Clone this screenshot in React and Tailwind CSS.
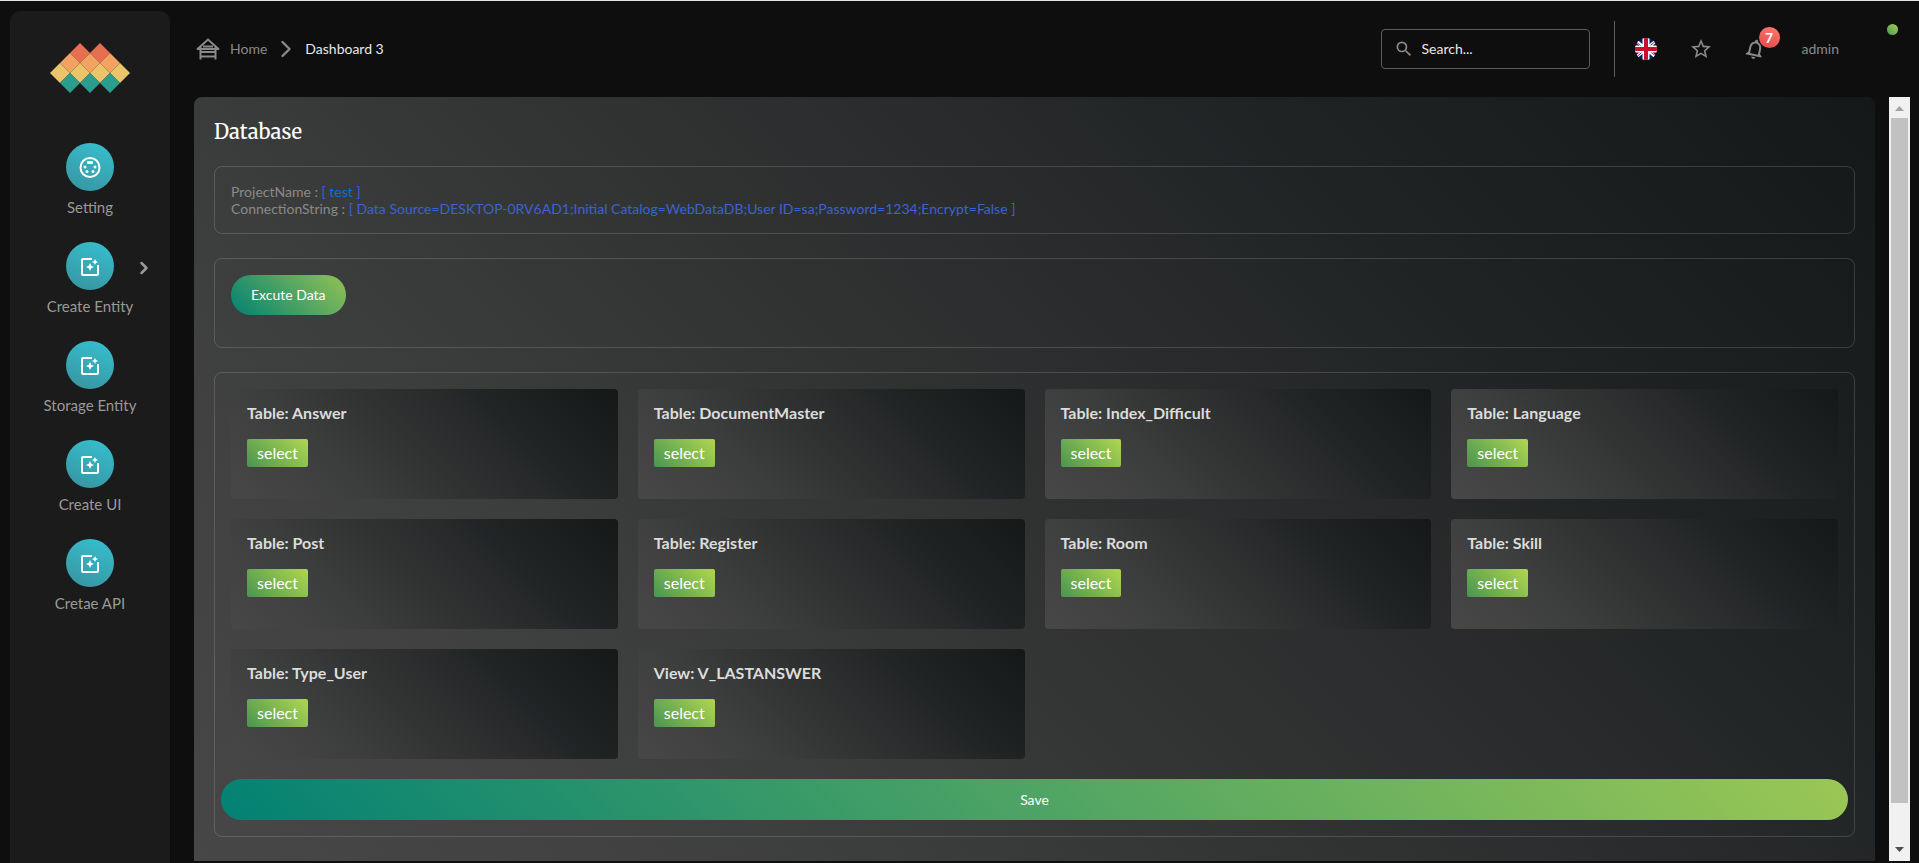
import { useState } from "react";
import { ChevronRight } from "lucide-react";
import { MdOutlineStarBorder, MdSearch } from "react-icons/md";

const menu = [
  { label: "Setting", icon: "setting" },
  { label: "Create Entity", icon: "create", children: true },
  { label: "Storage Entity", icon: "create" },
  { label: "Create UI", icon: "create" },
  { label: "Cretae API", icon: "create" },
];

const tables = [
  "Table: Answer",
  "Table: DocumentMaster",
  "Table: Index_Difficult",
  "Table: Language",
  "Table: Post",
  "Table: Register",
  "Table: Room",
  "Table: Skill",
  "Table: Type_User",
  "View: V_LASTANSWER",
];

const logoTiles = [
  { y: 10, xs: [30, 50], color: "#e76f51" },
  { y: 20, xs: [20, 40, 60], color: "#f4a261" },
  { y: 30, xs: [10, 30, 50, 70], color: "#e9c46a" },
  { y: 40, xs: [20, 40, 60], color: "#2a9d8f" },
];

const Logo = () => (
  <svg viewBox="0 0 80 50" className="h-[50px] w-20" role="img" aria-label="Logo">
    {logoTiles.map((row) =>
      row.xs.map((x) => (
        <path
          key={`${x}-${row.y}`}
          d={`M${x} ${row.y - 10}l10 10l-10 10l-10-10z`}
          fill={row.color}
        />
      ))
    )}
  </svg>
);

const SettingIcon = () => (
  <svg viewBox="0 0 24 24" className="size-6" fill="currentColor">
    <circle cx="12" cy="12.5" r="9.5" fill="none" stroke="currentColor" strokeWidth="2" />
    <rect x="9" y="6" width="6" height="3" rx="1" />
    <circle cx="7" cy="12" r="1.5" />
    <circle cx="17" cy="12" r="1.5" />
    <circle cx="9" cy="16.5" r="1.5" />
    <circle cx="15" cy="16.5" r="1.5" />
  </svg>
);

const CreateIcon = () => (
  <svg viewBox="0 0 24 24" className="size-6" fill="currentColor">
    <path d="M19 11v9H5V6h9V4H5c-1.100 0-2 .9-2 2v14c0 1.100.9 2 2 2h14c1.100 0 2-.9 2-2v-9z" />
    <path d="M17 11l.94-2.060L20 8l-2.060-.94L17 5l-.94 2.060L14 8l2.060.94z" />
    <path d="M13.250 11.750L12 9l-1.250 2.750L8 13l2.750 1.250L12 17l1.250-2.750L16 13z" />
  </svg>
);

const HomeIcon = () => (
  <svg viewBox="0 0 24 22" className="h-[22px] w-6" fill="none" stroke="currentColor" strokeWidth="2">
    <path d="M1 11.5L12 1.500l11 10M4.500 9v12.500M19.500 9v12.500M7 8.500h10M1 11h22M4.500 14h15M4.500 18.500h15" />
  </svg>
);

const BellIcon = () => (
  <svg viewBox="0 0 24 24" className="size-6 rotate-12" fill="currentColor">
    <path d="M12 22c1.100 0 2-.9 2-2h-4c0 1.100.9 2 2 2zm6-6v-5c0-3.070-1.630-5.640-4.500-6.320V4c0-.83-.67-1.500-1.500-1.500s-1.500.67-1.500 1.500v.68C7.640 5.360 6 7.920 6 11v5l-2 2v1h16v-1l-2-2zm-2 1H8v-6c0-2.480 1.510-4.500 4-4.500s4 2.020 4 4.500v6z" />
  </svg>
);

const Flag = () => (
  <svg viewBox="0 0 22 22" className="size-[22px]" role="img" aria-label="English">
    <clipPath id="round">
      <circle cx="11" cy="11" r="11" />
    </clipPath>
    <g clipPath="url(#round)">
      <rect width="22" height="22" fill="#012169" />
      <path d="M0 2l22 18M22 2L0 20" stroke="#fff" strokeWidth="3" />
      <path d="M0 3l11 9M22 2L11 11M0 20l11-9M22 19l-11-9" stroke="#c8102e" strokeWidth="1" />
      <path d="M11 0v22M0 11h22" stroke="#fff" strokeWidth="7" />
      <path d="M11 0v22M0 11h22" stroke="#c8102e" strokeWidth="4" />
    </g>
  </svg>
);

const Sidebar = () => (
  <aside className="mt-2.5 ml-2.5 flex w-40 shrink-0 flex-col items-center rounded-t-[10px] bg-[#1b1b1b] pt-8">
    <Logo />
    <nav className="mt-[50px] flex w-full flex-col gap-[25px]">
      {menu.map((item) => (
        <a
          key={item.label}
          href="#"
          className="relative flex flex-col items-center gap-1.5 text-[15px] leading-5 text-[#999]"
        >
          <span className="flex size-12 items-center justify-center rounded-full bg-linear-[20deg,#37939f,#37c0d0] text-white">
            {item.icon === "setting" ? <SettingIcon /> : <CreateIcon />}
          </span>
          <span>{item.label}</span>
          {item.children && (
            <ChevronRight className="absolute top-4 right-4 size-5" strokeWidth={3} />
          )}
        </a>
      ))}
    </nav>
  </aside>
);

const Header = () => {
  const [search, setSearch] = useState("");

  return (
    <header className="flex h-24 items-center text-sm text-[#8a8a8a]">
      <nav className="flex items-center" aria-label="Breadcrumb">
        <a href="#" className="ml-0.5 flex items-center gap-2.5">
          <HomeIcon />
          Home
        </a>
        <ChevronRight className="mx-[5px] size-7" strokeWidth={2} />
        <a href="#" className="text-[#e8e8e8]">
          Dashboard 3
        </a>
      </nav>

      <label className="ml-auto flex h-10 w-[209px] items-center gap-2 rounded border border-[#5c5c5c] px-3">
        <MdSearch className="size-5 shrink-0" />
        <input
          type="text"
          aria-label="Search"
          placeholder="Search..."
          value={search}
          onChange={(e) => setSearch(e.target.value)}
          className="w-full bg-transparent text-[#e8e8e8] outline-none placeholder:text-[#e8e8e8]"
        />
      </label>

      <div className="ml-6 flex h-14 items-center border-l border-[#5c5c5c] pl-5">
        <button type="button">
          <Flag />
        </button>
        <button type="button" className="ml-8" aria-label="Favorites">
          <MdOutlineStarBorder className="size-6" />
        </button>
        <button type="button" className="relative ml-[30px]" aria-label="Notifications">
          <BellIcon />
          <span className="absolute -top-2.5 left-4 flex size-[21px] items-center justify-center rounded-full bg-linear-[20deg,#e04848,#ff7b70] text-sm font-bold text-white">
            7
          </span>
        </button>
        <button type="button" className="ml-[35px]">
          admin
        </button>
      </div>
      <span className="mr-[21px] mb-10 ml-12 size-[11px] rounded-full bg-linear-[45deg,#4e9a55,#a5cf55]" />
    </header>
  );
};

const TableCard = ({ name }) => (
  <div className="h-[110px] rounded bg-linear-[45deg,#484747,#3c3e3d_28%,#323433_45%,#2a2b2d_60%,#1f2324_75%,#141819] px-4 pt-3">
    <h2 className="text-base leading-6 font-bold text-[#dcdcdc]">{name}</h2>
    <button
      type="button"
      className="mt-3.5 block h-7 rounded-[2px] bg-linear-[45deg,#4a9550,#b0d651] px-2.5 text-base leading-7 text-white"
    >
      select
    </button>
  </div>
);

const ScrollRail = () => (
  <div className="flex w-[21px] shrink-0 flex-col items-center bg-[#f1f1f1]" aria-hidden="true">
    <svg viewBox="0 0 21 21" className="size-[21px]">
      <path d="M6 14h9l-4.500-5z" fill="#a3a3a3" />
    </svg>
    <div className="w-[17px] grow bg-[#c1c1c1]" />
    <div className="h-[37px]" />
    <svg viewBox="0 0 21 21" className="size-[21px]">
      <path d="M6 7h9l-4.500 5z" fill="#505050" />
    </svg>
  </div>
);

const box = "rounded-lg border border-white/15";

const App = () => {
  return (
    <div className="flex h-screen overflow-hidden border-t border-[#dfe6e4] bg-[#0e0e0e] font-[Lato,sans-serif] text-sm">
      <Sidebar />
      <div className="ml-6 flex min-w-0 grow flex-col pb-0.5">
        <Header />
        <div className="flex min-h-0 grow gap-3.5 pr-[9px]">
          <main className="min-w-0 grow rounded-t-lg bg-linear-[45deg,#484747,#3c3e3d_28%,#323433_45%,#2a2b2d_60%,#1f2324_75%,#141819] px-5 pt-[21px]">
            <h1 className="font-[Merriweather,'Noto_Serif','DejaVu_Serif',serif] text-xl leading-7 font-medium text-white">
              Database
            </h1>

            <section className={`${box} mt-5 h-[68px] px-4 pt-4 leading-[17px] text-[#8a8a8a]`}>
              <p>
                ProjectName : <span className="text-[#0d6edb]">[ test ]</span>
              </p>
              <p>
                ConnectionString :{" "}
                <span className="text-[#3d62cf]">
                  [ Data Source=DESKTOP-0RV6AD1;Initial Catalog=WebDataDB;User ID=sa;Password=1234;Encrypt=False ]
                </span>
              </p>
            </section>

            <section className={`${box} mt-6 h-[90px] p-4`}>
              <button
                type="button"
                className="h-10 rounded-full bg-linear-[45deg,#028174,#92c254] px-5 text-white"
              >
                Excute Data
              </button>
            </section>

            <section className={`${box} mt-6 px-1.5 py-4`}>
              <div className="grid grid-cols-4 gap-5 px-2.5">
                {tables.map((name) => (
                  <TableCard key={name} name={name} />
                ))}
              </div>
              <button
                type="button"
                className="mt-5 h-[41px] w-full rounded-full bg-linear-[45deg,#028174,#9bc754] text-white"
              >
                Save
              </button>
            </section>
          </main>
          <ScrollRail />
        </div>
      </div>
    </div>
  );
};

export default App;
